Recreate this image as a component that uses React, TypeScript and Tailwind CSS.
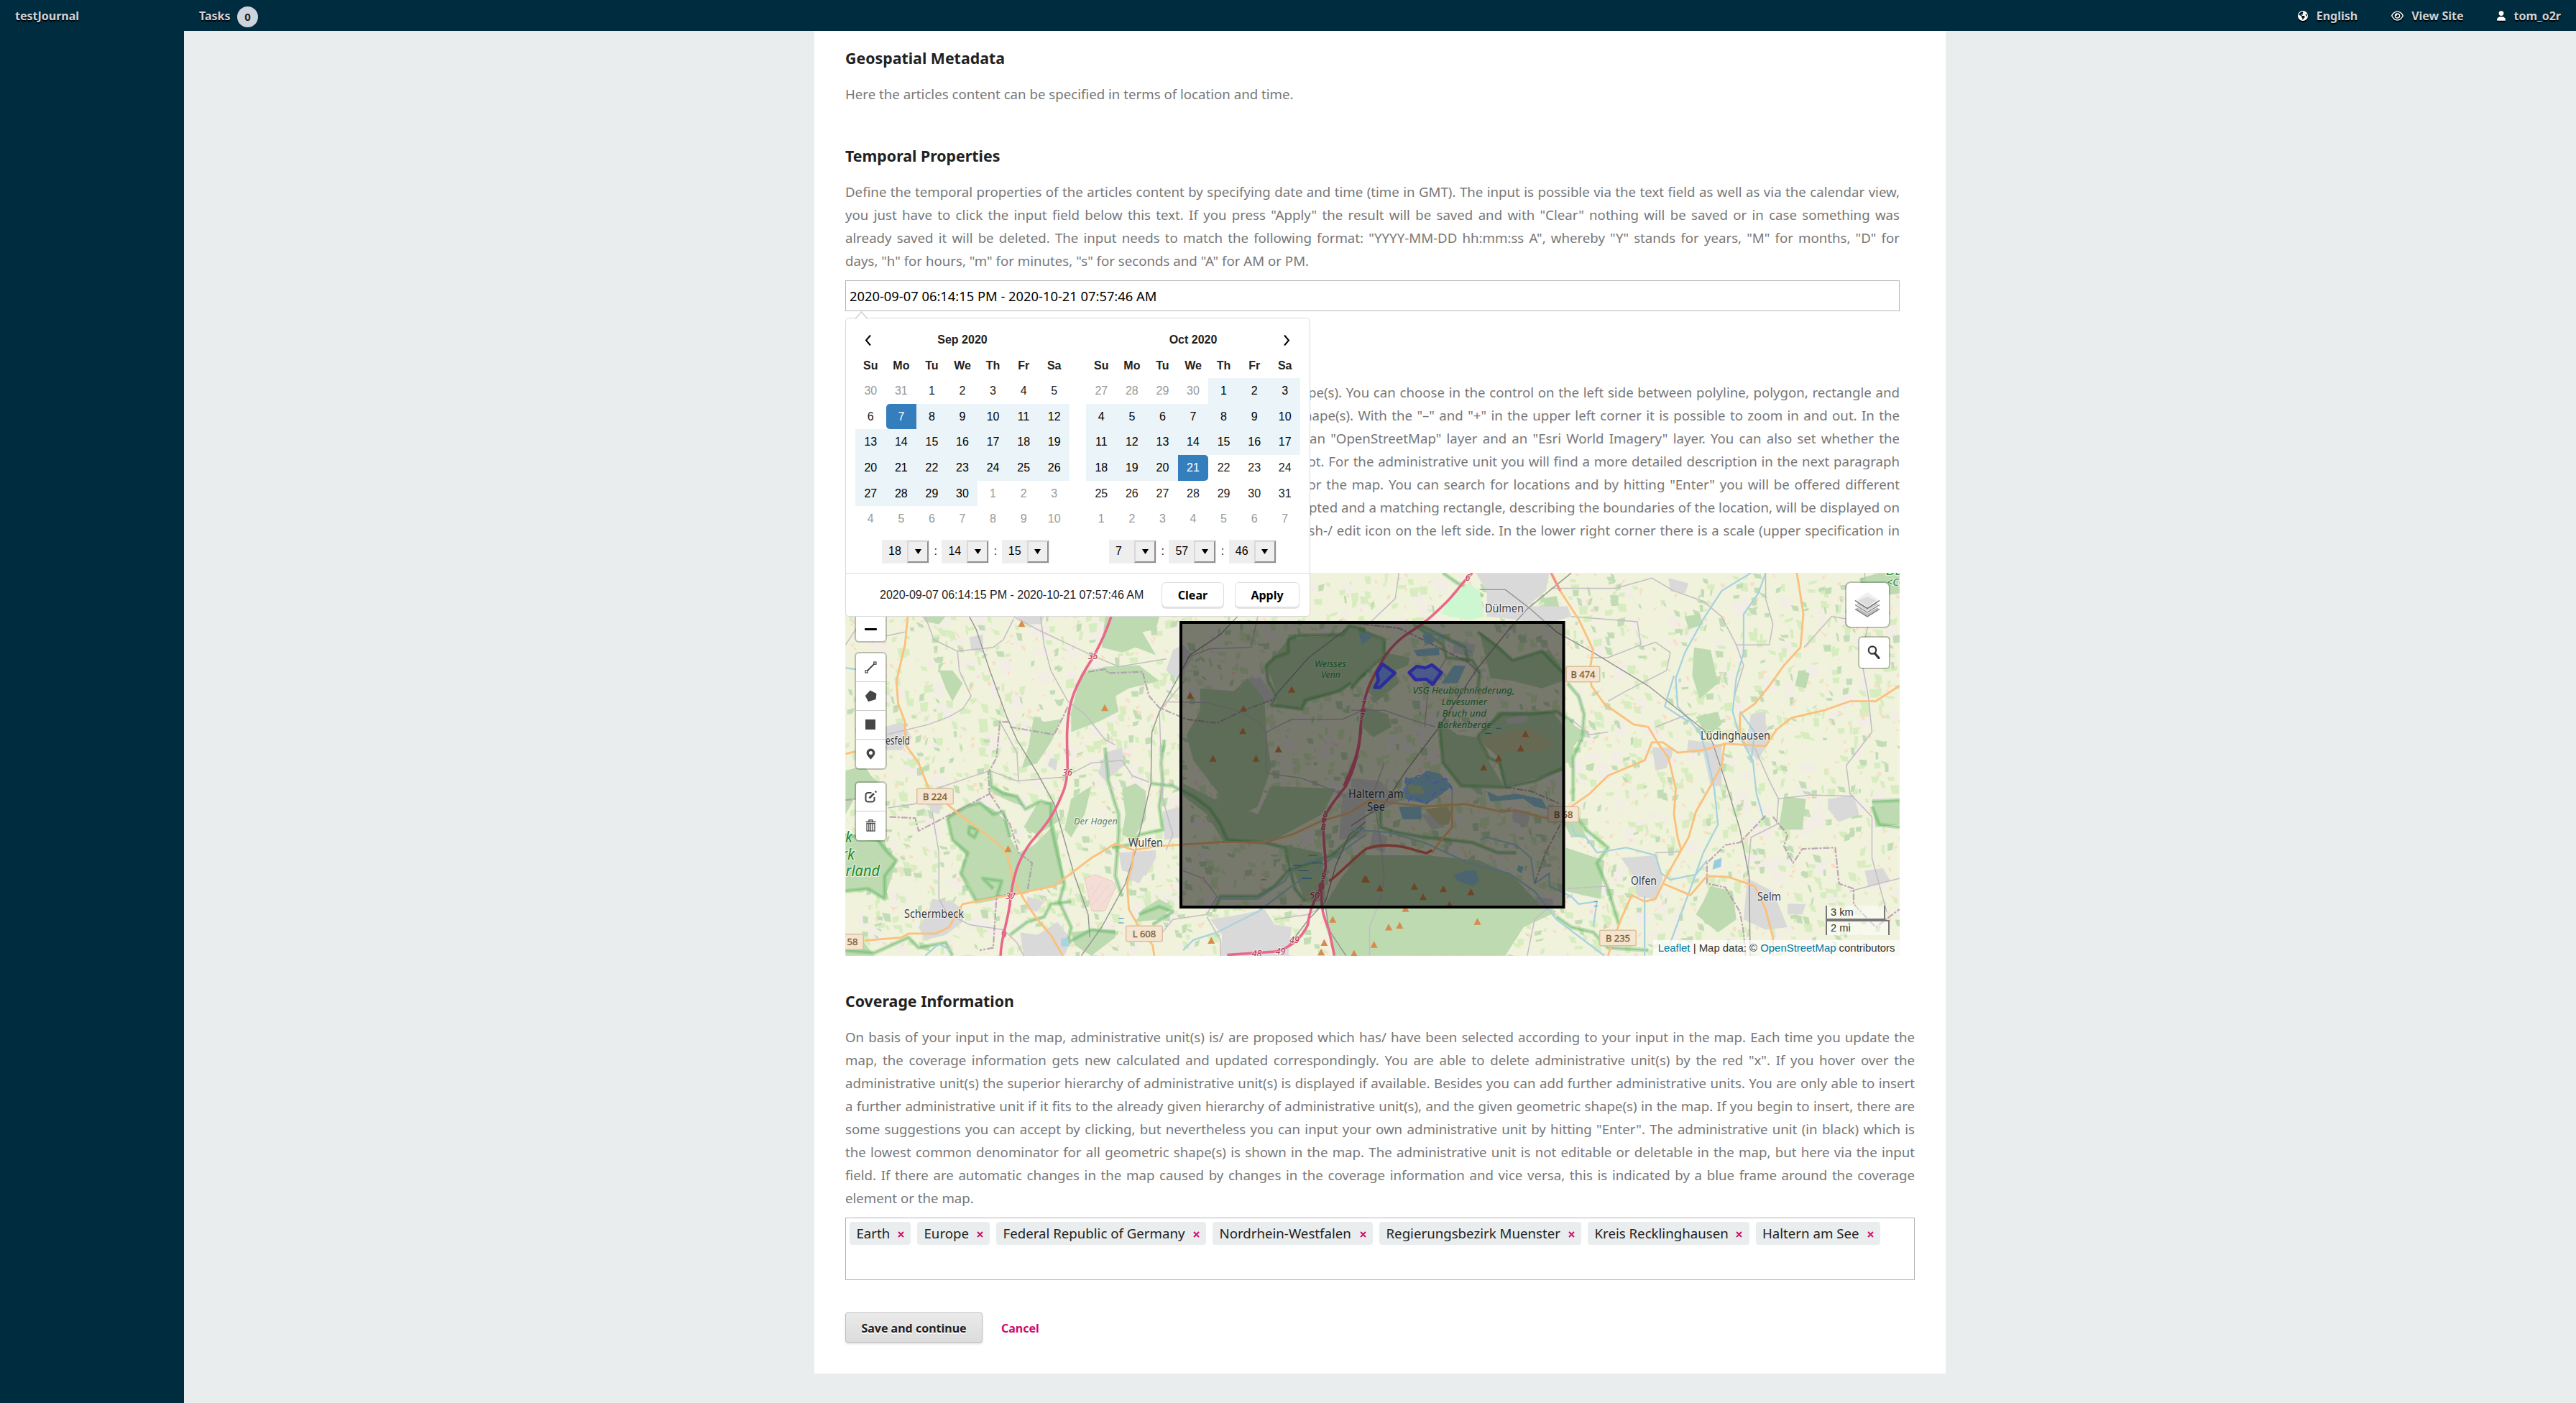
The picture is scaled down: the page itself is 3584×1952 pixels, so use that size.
import React from "react";
import { FaEarthAmericas, FaRegEye, FaUser } from "react-icons/fa6";

const temporalLines = [
  "Define the temporal properties of the articles content by specifying date and time (time in GMT). The input is possible via the text field as well as via the calendar view,",
  'you just have to click the input field below this text. If you press "Apply" the result will be saved and with "Clear" nothing will be saved or in case something was',
  'already saved it will be deleted. The input needs to match the following format: "YYYY-MM-DD hh:mm:ss A", whereby "Y" stands for years, "M" for months, "D" for',
  'days, "h" for hours, "m" for minutes, "s" for seconds and "A" for AM or PM.',
];

const spatialLines: [string, string][] = [
  ["pl-[613px]", "shape(s). You can choose in the control on the left side between polyline, polygon, rectangle and"],
  ["pl-[629px]", 'shape(s). With the "–" and "+" in the upper left corner it is possible to zoom in and out. In the'],
  ["pl-[646px]", 'an "OpenStreetMap" layer and an "Esri World Imagery" layer. You can also set whether the'],
  ["pl-[632px]", "not. For the administrative unit you will find a more detailed description in the next paragraph"],
  ["pl-[637px]", 'for the map. You can search for locations and by hitting "Enter" you will be offered different'],
  ["pl-[606px]", "accepted and a matching rectangle, describing the boundaries of the location, will be displayed on"],
  ["pl-[620px]", "trash-/ edit icon on the left side. In the lower right corner there is a scale (upper specification in"],
];

const coverageLines = [
  "On basis of your input in the map, administrative unit(s) is/ are proposed which has/ have been selected according to your input in the map. Each time you update the",
  'map, the coverage information gets new calculated and updated correspondingly. You are able to delete administrative unit(s) by the red "x". If you hover over the',
  "administrative unit(s) the superior hierarchy of administrative unit(s) is displayed if available. Besides you can add further administrative units. You are only able to insert",
  "a further administrative unit if it fits to the already given hierarchy of administrative unit(s), and the given geometric shape(s) in the map. If you begin to insert, there are",
  'some suggestions you can accept by clicking, but nevertheless you can input your own administrative unit by hitting "Enter". The administrative unit (in black) which is',
  "the lowest common denominator for all geometric shape(s) is shown in the map. The administrative unit is not editable or deletable in the map, but here via the input",
  "field. If there are automatic changes in the map caused by changes in the coverage information and vice versa, this is indicated by a blue frame around the coverage",
  "element or the map.",
];

function Lines({ lines }: { lines: string[] }) {
  return (
    <>
      {lines.map((l, i) => (
        <span
          key={i}
          className={
            i === lines.length - 1
              ? "block whitespace-nowrap"
              : "block whitespace-nowrap text-justify [text-align-last:justify]"
          }
        >
          {l}
        </span>
      ))}
    </>
  );
}

/* ---------- calendar ---------- */

const days = ["Su", "Mo", "Tu", "We", "Th", "Fr", "Sa"];
// Grid offsets are indexes into the 42 cells of a month page.
const sep = { title: "Sep 2020", prev: [30, 31], len: 30, from: 8, to: 31, start: 8, end: -1 };
const oct = { title: "Oct 2020", prev: [27, 28, 29, 30], len: 31, from: 4, to: 24, start: -1, end: 24 };

function Month({ m, side }: { m: typeof sep; side: "left" | "right" }) {
  const cells: { n: number; off: boolean }[] = [];
  m.prev.forEach((n) => cells.push({ n, off: true }));
  for (let n = 1; n <= m.len; n++) cells.push({ n, off: false });
  for (let n = 1; cells.length < 42; n++) cells.push({ n, off: true });
  return (
    <div className="w-[298px] text-center text-[16px] leading-[35.6px] text-[#222]">
      <div className="relative h-[35.6px] font-bold">
        {side === "left" && (
          <svg className="absolute left-[12px] top-[10px] h-[17px] w-[11px]" viewBox="0 0 11 17">
            <path d="M9 1.5 L3 8.5 L9 15.5" fill="none" stroke="#000" strokeWidth="2" />
          </svg>
        )}
        {m.title}
        {side === "right" && (
          <svg className="absolute right-[13px] top-[10px] h-[17px] w-[11px]" viewBox="0 0 11 17">
            <path d="M2 1.5 L8 8.5 L2 15.5" fill="none" stroke="#000" strokeWidth="2" />
          </svg>
        )}
      </div>
      <div className="grid grid-cols-7">
        {days.map((d) => (
          <div key={d} className="h-[35.6px] font-bold">{d}</div>
        ))}
        {cells.map((c, i) => {
          let k = "h-[35.6px] ";
          if (i === m.start) k += "bg-[#357ebd] text-white rounded-l-[5px]";
          else if (i === m.end) k += "bg-[#357ebd] text-white rounded-r-[5px]";
          else if (c.off) k += "text-[#999]";
          else if (i >= m.from && i <= m.to) k += "bg-[#ebf4f8] text-black";
          return <div key={i} className={k}>{c.n}</div>;
        })}
      </div>
    </div>
  );
}

function TimeSelect({ v }: { v: string }) {
  return (
    <div className="flex h-[33px] w-[66px] items-center bg-[#eee] pl-[9px] pr-px text-[16px] text-black">
      <span className="flex-1">{v}</span>
      <span className="flex h-[31px] w-[30px] items-center justify-center border-2 border-b-[#8f8f8f] border-l-[#d8d8d8] border-r-[#8f8f8f] border-t-[#d8d8d8] bg-[#efefef]">
        <svg className="h-[7px] w-[9px]" viewBox="0 0 9 7"><path d="M0 0H9L4.5 7Z" fill="#000" /></svg>
      </span>
    </div>
  );
}

function TimeRow({ t, pad }: { t: string[]; pad: string }) {
  return (
    <div className={"flex items-center " + pad}>
      {t.map((v, i) => (
        <React.Fragment key={i}>
          {i > 0 && <span className="w-[17.4px] text-center text-[16px]">:</span>}
          <TimeSelect v={v} />
        </React.Fragment>
      ))}
    </div>
  );
}

function Calendar() {
  return (
    <div className="absolute left-[-1px] top-[51px] z-20 h-[416px] w-[647px] rounded-[5px] border border-[#d8d8d8] bg-white font-['Liberation_Sans',Arial,sans-serif] text-[#222]">
      <svg className="absolute left-[12px] top-[-10px] h-[11px] w-[20px]" viewBox="0 0 20 11">
        <path d="M1 10.5 L9.5 1 L18 10.5" fill="#fff" stroke="#ccc" strokeWidth="1.3" />
        <rect x="2" y="10" width="15" height="2" fill="#fff" />
      </svg>
      <div className="flex h-[355px] flex-col border-b border-[#ddd]">
        <div className="flex gap-[23px] pl-[13px] pt-[12px]">
          <Month m={sep} side="left" />
          <Month m={oct} side="right" />
        </div>
        <div className="flex pl-[50px] pt-[11px]">
          <TimeRow t={["18", "14", "15"]} pad="w-[316px]" />
          <TimeRow t={["7", "57", "46"]} pad="" />
        </div>
      </div>
      <div className="flex h-[59px] items-center justify-end pr-[14px] text-[16px]">
        <span className="mr-[23px] w-[369px] whitespace-nowrap">2020-09-07 06:14:15 PM - 2020-10-21 07:57:46 AM</span>
        <button className="mr-[15px] h-[35px] w-[87px] rounded-[6px] border border-[#ddd] bg-white font-['Noto_Sans',sans-serif] font-bold text-black shadow-[0_2px_0_#e4e4e4]">Clear</button>
        <button className="h-[35px] w-[90px] rounded-[6px] border border-[#ddd] bg-white font-['Noto_Sans',sans-serif] font-bold text-black shadow-[0_2px_0_#e4e4e4]">Apply</button>
      </div>
    </div>
  );
}

/* ---------- map ---------- */

// Deterministic scatter of small irregular land-use parcels.
function scatter(seed: number, count: number, min: number, max: number) {
  let s = seed;
  const r = () => {
    s = (s * 1664525 + 1013904223) % 4294967296;
    return s / 4294967296;
  };
  let d = "";
  for (let i = 0; i < count; i++) {
    const x = 1176 + r() * 1467;
    const y = 797 + r() * 533;
    const w = min + r() * (max - min);
    const h = min + r() * (max - min);
    const k = (r() - 0.5) * 6;
    d += `M${x.toFixed(1)} ${y.toFixed(1)}l${w.toFixed(1)} ${k.toFixed(1)}l${(k * 0.8).toFixed(1)} ${h.toFixed(1)}l${(-w * 0.8).toFixed(1)} ${(-k * 0.7).toFixed(1)}z`;
  }
  return d;
}

const lightFields = scatter(7, 1400, 3, 13);
const woodsSmall = scatter(91, 850, 3, 12);
const pinkDots = scatter(33, 1100, 2, 6);
const paleFields = scatter(57, 420, 8, 24);

// Shapes of the western half, in a local coordinate frame.
const west = {
  woods: [
    "335,975 360,945 390,930 430,915 470,940 510,990 520,1050 545,1110 590,1080 650,1000 665,1100 680,1230 540,1270 420,1300 400,1240 375,1190 395,1130 350,1060",
    "35,1040 90,1040 150,1060 160,1110 185,1140 150,1290 100,1250 35,1260",
    "35,790 90,770 110,810 150,860 60,900 35,960",
    "800,190 960,190 950,240 910,250 950,340 890,310 850,330 790,310",
    "730,410 800,385 900,380 960,440 870,470 830,500 840,560 780,600 700,640 700,560",
    "590,580 620,600 670,590 640,680 600,760 555,780 575,690",
    "680,1020 700,900 760,850 740,960 700,1050",
    "850,860 890,840 920,870 920,980 880,1060 850,1040 860,960",
    "560,1010 600,920 650,910 660,990 600,1040",
    "1080,470 1180,480 1220,430 1270,500 1275,640 1290,780 1250,930 1170,980 1130,870 1060,750 1040,650 1080,560",
    "1275,380 1340,280 1500,260 1520,225 1568,240 1568,420 1490,480 1400,520 1380,550 1300,540 1310,500",
    "1290,850 1480,860 1440,960 1300,1060 1150,1070 1100,960 1030,890 1030,840 1120,900 1250,960",
    "1330,1080 1440,1110 1450,1300 1390,1300 1370,1230",
    "1450,1310 1500,1200 1568,1100 1568,1511 1480,1511 1450,1400",
    "960,1290 1000,1320 960,1370 890,1380 910,1330",
    "35,1460 90,1460 120,1511 35,1511",
    "700,1420 760,1410 830,1410 830,1440 760,1511 710,1470",
    "460,850 500,870 540,890 560,930 520,910 470,880",
    "1410,290 1450,270 1480,240 1420,340",
    "310,400 350,400 380,450 350,520 330,470",
    "260,190 330,190 310,220 270,210",
  ],
  towns: [
    "150,620 200,600 230,660 200,710 150,710",
    "290,1290 350,1300 385,1340 380,1380 330,1430 270,1450 250,1400 280,1340",
    "840,1110 950,1100 950,1130 920,1200 850,1180",
    "970,950 1020,930 1020,1050 975,1060",
    "800,720 850,700 855,770 800,830 780,800",
    "1110,1370 1200,1350 1270,1330 1300,1390 1350,1400 1340,1511 1140,1511 1145,1430",
    "550,1420 600,1430 660,1380 700,1450 680,1511 560,1511",
    "1000,320 1030,300 1060,340 1020,440 980,400",
    "1500,880 1568,860 1568,1050 1490,1060",
    "540,190 620,190 610,220 560,220",
    "400,270 440,260 440,330 405,320",
    "280,900 320,920 310,960 285,950",
    "570,1280 620,1300 600,1340 570,1330",
    "1220,430 1260,430 1305,510 1280,530",
    "890,1150 930,1160 900,1230 870,1210",
    "640,740 660,750 655,790 630,770",
  ],
  greenEdge: [
    "M335,975 L390,930 L430,915 L470,960 L500,950 L520,1050",
    "M335,975 L350,1060 L395,1110 L375,1190 L420,1300 L480,1285 L495,1220 L440,1210 L470,1250",
    "M400,1010 L425,1020 L415,1050 L398,1035 Z",
    "M35,1040 L130,1060 L160,1110 L185,1140 L150,1200 L150,1290 L100,1250 L35,1260",
    "M460,790 L465,850 L500,880 L540,890 L565,940 L610,910 L640,920 L640,1000 L660,1120 L680,1230 L665,1300 L700,1400 L690,1460 L760,1410 L830,1420",
    "M800,700 L810,830 L825,900 L840,960 L840,1040 L830,1200 L850,1280",
    "M975,670 L965,760 L970,830 L960,930 L970,1020 L900,1040 L870,1080 L820,1090",
    "M1275,380 L1300,350 L1340,330 L1340,280 L1370,265 L1500,260 L1520,225 L1568,240",
    "M1275,380 L1280,440 L1305,500 L1290,535 L1380,550 L1390,515 L1490,480 L1568,410",
    "M935,840 L1000,850 L1060,890 L1110,940 L1140,1000 L1160,1060 L1270,1070 L1330,1090 L1360,1250 L1390,1300",
    "M900,1350 L960,1320 L1000,1340 L940,1390",
    "M1120,1340 L1140,1280 L1250,1280 L1300,1240 L1340,1180 L1470,1120 L1560,1010",
    "M520,1430 L570,1380 L620,1360 L640,1310 L700,1300",
    "M35,1490 L120,1500 L220,1440 L250,1480 L330,1460 L350,1511",
  ],
  minor: [
    "M270,190 L295,280 L365,325 L370,400 L405,500 L380,550 L340,580 L280,610 L155,650",
    "M365,325 L470,310 L500,280 L530,200 M530,190 L600,240 L680,290 L760,340 L840,385 L980,355",
    "M610,190 L620,300 L640,400 L690,520 L740,570 L800,670 L830,690",
    "M160,935 L240,920 L280,870 L460,790 L540,830 L680,815 L760,760 L850,750 L880,810 L930,835",
    "M290,950 L310,1110 L310,1290 L340,1360",
    "M490,600 L540,720 L545,830",
    "M155,265 L210,250 M35,300 L70,230",
    "M340,1350 L400,1390 L500,1410 L540,1460 L560,1511",
    "M980,1100 L1000,1040 L970,900 L960,560 L1040,430",
    "M985,522 L1100,525 L1200,560 L1250,600 L1275,640 L1350,590 L1500,590 L1568,550",
    "M1040,350 L1110,315 L1230,310 L1250,190",
    "M1275,640 L1275,800 L1380,820 L1440,850 L1510,890",
    "M1030,1180 L1090,1210 L1130,1280 L1100,1350 L1000,1370 L950,1450",
    "M1100,1360 L1140,1450 L1140,1511 M1300,1370 L1400,1350 L1440,1320",
  ],
  orange: [
    "M218,190 L210,300 L185,440 L190,530 L210,600 L212,690 L250,760 L280,860 L370,960 L480,1070 L510,1110 L525,1200 L560,1290 L600,1370 L640,1430 L675,1511",
    "M35,725 L65,715",
    "M90,1452 L200,1440 L220,1425 L300,1425 L340,1400 L380,1310 L480,1285 L650,1240 L760,1130 L830,1075 L885,1100 L950,1085 L1150,1068 L1270,1070 L1350,1040 L1440,985 L1520,955 L1568,910",
    "M885,1100 L880,1160 L865,1230 L870,1330 L900,1400 L940,1470 L945,1511",
  ],
  rail: [
    "M400,190 L420,240 L460,400 L510,580 L540,670 L600,800 L650,920 L680,1060 L710,1200 L750,1350 L755,1440",
    "M1190,190 L1140,260 L1050,340 L1010,440 L960,560 L938,640 L935,840 L890,1100 L860,1230 L790,1400 L730,1511",
    "M1568,990 L1520,1040 L1480,1160 L1450,1300 L1400,1370 L1330,1490",
    "M1450,1320 L1460,1410 L1510,1511",
    "M1510,240 L1400,350 L1300,500",
  ],
  river: [
    "M1030,1490 L1060,1450 L1130,1420 L1250,1340 L1350,1240 L1470,1130 L1568,1040",
    "M1130,1290 L1250,1290 L1330,1220 L1360,1160 L1450,1130",
    "M35,390 L65,395",
    "M270,1511 L310,1465 L345,1490",
  ],
  border: [
    "M750,405 L800,395 L810,410 L910,405 L930,500 L960,545 L1040,590 L1130,605 L1200,560 L1300,510",
    "M520,620 L650,650 L680,570 L690,540",
    "M515,600 L490,600 L480,740 L455,800 L460,880 L360,950 L250,1025 L240,975 L160,970",
    "M460,880 L520,1000 L545,1110 L585,1150 L570,1265 L480,1280 L470,1480 L430,1490",
    "M35,905 L65,900",
  ],
};

const east = {
  woods: [
    "20,245 95,290 90,330 40,400 0,470 0,240",
    "90,330 160,350 155,380 120,400 130,450 70,520 45,480",
    "240,600 290,650 345,660 370,740 415,850 300,850 250,760",
    "350,250 400,300 440,360 540,320 578,400 578,440 520,470 440,440 380,430",
    "585,590 635,640 605,700 605,760 585,760",
    "400,560 550,560 580,620 580,790 420,850 400,740 350,660",
    "0,1120 200,1120 350,1140 440,1200 500,1290 560,1340 470,1400 420,1511 0,1511",
    "585,1090 690,1140 680,1290 585,1260",
    "560,940 620,970 640,1050 600,1050",
    "980,1240 1040,1260 1050,1370 1000,1420 940,1350 960,1300",
    "935,310 980,320 1000,450 950,510 930,420",
    "1180,890 1240,900 1230,1020 1165,1020",
    "1420,910 1495,905 1495,1000 1430,1010",
    "1390,40 1440,20 1495,20 1495,100 1440,110",
    "940,580 1000,560 1010,610 970,660",
    "910,190 950,180 960,220 920,240",
    "1220,400 1250,410 1240,470 1210,460",
    "520,120 560,110 570,170 530,150",
    "30,540 100,570 110,620 60,660 30,620",
  ],
  towns: [
    "340,20 540,20 530,90 480,150 590,150 600,190 530,220 440,200 370,190 370,90",
    "1090,570 1130,560 1130,600 1140,670 1110,750 1075,700",
    "920,670 1010,690 1010,850 980,850 960,720 915,720",
    "735,1130 830,1120 850,1210 830,1290 780,1280 770,1200",
    "1080,1210 1150,1260 1190,1400 1130,1410 1070,1370",
    "1300,900 1370,885 1385,960 1330,990 1300,940",
    "820,700 880,700 860,780 830,790",
    "865,40 920,60 910,100 870,90",
    "1400,1180 1450,1170 1470,1220 1410,1240",
    "0,820 80,830 130,910 60,960 0,930",
    "280,280 340,300 330,350 280,330",
    "440,940 490,950 480,1005 440,990",
    "190,960 250,960 255,1010 220,1020",
    "420,590 480,570 480,600 430,610",
    "1190,1310 1240,1310 1230,1350 1190,1350",
    "500,1280 550,1290 550,1330 520,1330",
    "60,1020 100,1050 90,1110 50,1090",
  ],
  greenEdge: [
    "M170,220 L250,300 L260,350 L330,360 L350,410 L345,480",
    "M20,240 L90,280 L90,340 L30,420 L0,470",
    "M190,225 L310,310 L320,370",
    "M345,250 L400,310 L440,360 L520,325 L578,410",
    "M590,450 L620,500 L635,570 L630,660 L605,740 L605,910",
    "M240,600 L250,760 L300,850 L420,855 L500,830 L578,780",
    "M345,655 L375,740 L405,760 L420,850",
    "M345,655 L410,570 L490,570 L560,560 L605,600",
    "M80,930 L80,1010 L120,1030 L200,1050 L330,1070 L400,1110 L450,1110",
    "M610,960 L640,1020 L700,1090 L670,1150 L700,1250 L730,1390",
    "M560,1360 L600,1400 L660,1420 L700,1480 L810,1490",
    "M1420,910 L1495,905 M1420,930 L1440,1000 L1495,1010",
    "M1390,40 L1400,80 L1460,100",
    "M250,20 L290,60 L360,110",
  ],
  minor: [
    "M130,20 L120,120 L50,215",
    "M545,80 L720,80 L820,40 L880,90 L960,130 L1010,190 L1050,300 L1070,380 L1045,500",
    "M600,190 L780,210 L790,300 L700,350 L650,350",
    "M1050,300 L1140,300 L1150,220 L1130,120 L1130,20",
    "M1400,20 L1410,220 L1390,350 L1410,500 L1420,640 L1350,770 L1360,880 L1420,970 L1420,1130 L1460,1340",
    "M1235,310 L1310,190 L1400,210",
    "M1100,700 L1140,830 L1165,900 L1250,885 L1370,890",
    "M1165,900 L1160,1000 L1090,1050 L1080,1200",
    "M790,310 L830,290 L870,330 L860,400 L750,480 L700,520",
    "M920,570 L830,620 M600,590 L650,650 L700,640",
    "M0,555 L90,555 L160,590 L230,620",
    "M90,760 L60,880 L80,1070 L90,1200 L80,1290 L50,1400 L50,1511",
    "M275,860 L275,920 M200,620 L210,470 L260,350",
    "M1360,1260 L1440,1230 L1495,1210",
    "M480,1511 L500,1370 L540,1320",
    "M830,1110 L900,1105 M700,1240 L590,1250",
  ],
  orange: [
    "M570,90 L620,200 L660,320 L650,400 L655,460 L690,530 L770,610 L810,620 L835,680 L865,740 L885,860 L880,960 L890,1050 L900,1100 L860,1200 L850,1230 L925,1275 L970,1200 L1030,1205 L1100,1240 L1130,1330 L1150,1440 L1150,1511",
    "M1215,20 L1222,80 L1233,180 L1225,310 L1180,380 L1140,460 L1100,530 L1060,570 L1060,640 L1075,690 L1130,695 L1160,630 L1200,585 L1290,555 L1360,520 L1430,520 L1495,460",
    "M0,950 L50,905 L110,915 L200,930 L310,920 L410,950 L450,945 L530,975 L600,930 L650,880 L700,810 L800,750 L820,680 L850,680 L890,720 L960,710 L1020,685 L1075,690",
    "M1018,685 L1010,770 L980,850 L940,950 L920,1050 L900,1100",
    "M850,1230 L830,1290 L800,1300 L765,1275 L735,1370 L700,1511",
    "M275,920 L275,1010 L240,1070 L220,1110",
  ],
  rail: [
    "M600,20 L480,160 L430,240 L340,400 L240,620 L150,790 L90,920 L0,1005",
    "M350,85 L420,85 L480,150 L560,250 L660,330 L810,460 L960,630 L985,680 L1020,830 L1060,1020 L1085,1200 L1088,1511",
  ],
  river: [
    "M1090,20 L1010,90 L960,200 L910,330 L885,430 L890,540 L950,640 L970,730 L990,860 L1000,1000 L960,1110 L930,1230 L860,1500",
    "M1130,20 L1110,100 L1070,180 L1070,330 L1050,430 L1040,560 L1060,660 L1095,750 L1105,880 L1125,980",
    "M1060,560 L1100,640 L1090,760",
    "M880,420 L855,540 L920,600",
    "M600,1000 L610,1040 L640,1050 L670,1110 L750,1090 L830,1120 L845,1190 L870,1215 L940,1195 L970,1140",
    "M0,1020 L100,1030 L200,1070 L320,1150 L430,1190 L500,1260 L560,1370 L690,1511",
    "M350,1060 L370,1050 L450,1080 L490,1130 L500,1230 L540,1190 L540,1240 L600,1280 L620,1310 L670,1300 L660,1400",
    "M190,240 L260,280 L330,330 M200,300 L250,270",
    "M800,1511 L800,1280",
  ],
  border: [
    "M0,215 L130,235 L210,290 L320,370 L350,410",
    "M1130,965 L1060,1070 L1020,1080 L970,1150 L970,1230 L1020,1245 L1060,1340 L1070,1420 L1075,1511",
    "M1150,970 L1190,1040 L1180,1085 L1205,1150 L1230,1095 L1320,1090 L1330,1230 L1370,1250 L1370,1310 L1430,1400 L1495,1330",
    "M420,855 L490,870 L570,920 M570,1000 L530,1110 L500,1230",
  ],
};

function Region({ g, t }: { g: typeof west; t: string }) {
  const v = { vectorEffect: "non-scaling-stroke" as const, fill: "none" };
  return (
    <g transform={t} strokeLinejoin="round">
      {g.woods.map((p) => <polygon key={p} points={p} fill="#bddab1" />)}
      {g.towns.map((p) => <polygon key={p} points={p} fill="#d9d9d9" />)}
      {g.greenEdge.map((p) => (
        <g key={p}>
          <path d={p} {...v} stroke="#6cbc6c" strokeOpacity=".35" strokeWidth="6" />
          <path d={p} {...v} stroke="#6cb86e" strokeOpacity=".5" strokeWidth="2" />
        </g>
      ))}
      {g.minor.map((p) => <path key={p} d={p} {...v} stroke="#c3bdc4" strokeWidth="1.5" />)}
      {g.river.map((p) => <path key={p} d={p} {...v} stroke="#a5d2e0" strokeWidth="2.2" />)}
      {g.border.map((p) => <path key={p} d={p} {...v} stroke="#ab8fab" strokeOpacity=".75" strokeWidth="2.2" strokeDasharray="9 2 3 2" />)}
      {g.rail.map((p) => <path key={p} d={p} {...v} stroke="#949494" strokeWidth="1.4" />)}
      {g.orange.map((p) => <path key={p} d={p} {...v} stroke="#fbc07c" strokeWidth="2.8" />)}
    </g>
  );
}

const peaksWest = [[554, 218], [799, 545], [514, 1095], [1051, 497], [1208, 548], [1206, 635], [1118, 743], [1245, 743], [1311, 706], [1350, 474], [1471, 1370], [1446, 1460], [1437, 1497], [1113, 1452], [1534, 1502], [1566, 1212]];
const peaksEast = [[475, 647], [462, 703], [402, 741], [361, 777], [41, 1214], [78, 1248], [172, 1241], [196, 1282], [251, 1251], [326, 1263], [268, 1312], [148, 1328], [344, 1378], [102, 1400], [132, 1393], [62, 1468]];

// text, left x, right x, baseline, size, style
const places: [string, number, number, number, number, string][] = [
  ["esfeld", 1232, 1266, 1036, 15.5, "town"],
  ["Schermbeck", 1258, 1341, 1277, 15.5, "town"],
  ["Wulfen", 1570, 1618, 1177.5, 15.5, "town"],
  ["Dülmen", 2066, 2120, 851.5, 15.5, "town"],
  ["Haltern am", 1876, 1952.5, 1109.5, 15.5, "town"],
  ["See", 1902, 1927, 1128, 15.5, "town"],
  ["Lüdinghausen", 2366, 2463, 1029, 15.5, "town"],
  ["Olfen", 2269, 2305, 1230.5, 15.5, "town"],
  ["Selm", 2445, 2478, 1252.5, 15.5, "town"],
  ["Der Hagen", 1494, 1555, 1146.5, 13, "wood"],
  ["Weisses", 1829, 1873, 927.5, 13, "park"],
  ["Venn", 1838, 1865, 943, 13, "park"],
  ["VSG Heubachniederung,", 1965.5, 2107.5, 965, 13, "park"],
  ["Lavesumer", 2005.5, 2069, 981, 13, "park"],
  ["Bruch und", 2006.5, 2068, 997, 13, "park"],
  ["Borkenberge", 2000, 2075, 1012.5, 13, "park"],
  ["rk", 1168, 1186, 1172, 21, "big"],
  ["rk", 1171, 1189, 1196, 21, "big"],
  ["rland", 1176.5, 1224, 1219, 21, "big"],
  ["Dül", 2624, 2652, 800, 14, "big"],
  ["<CC", 2625, 2650, 815, 14, "big"],
];

const styles: Record<string, { fill: string; italic: boolean }> = {
  town: { fill: "#3f3f3f", italic: false },
  wood: { fill: "#5f7f5f", italic: true },
  park: { fill: "#2f9a3f", italic: true },
  big: { fill: "#1f8a2c", italic: true },
};

const shields: [string, number, number, number][] = [
  ["B 224", 1275, 1096.5, 52],
  ["58", 1160, 1299, 42],
  ["L 608", 1566, 1287.5, 52],
  ["B 474", 2178.5, 926.5, 48],
  ["B 58", 2153, 1121.5, 44],
  ["B 235", 2225, 1293.5, 52],
];

const exits: [string, number, number][] = [
  ["35", 1520.5, 917], ["36", 1485, 1079], ["37", 1406, 1251], ["8", 1844, 1137], ["8", 1841, 1155],
  ["9", 1841.5, 1223], ["50", 1829, 1249.5], ["49", 1801, 1312], ["49", 1781.5, 1328], ["48", 1748.5, 1331],
  ["7", 1897, 984], ["7", 1895, 1001], ["6", 2042, 808],
];

const tw = "translate(1160 790) scale(0.4719 0.35714)";
const te = "translate(1880 790) scale(0.5102 0.35714)";

function MapDrawing() {
  const mw = { fill: "none", vectorEffect: "non-scaling-stroke" as const, stroke: "#e9688a", strokeWidth: 3.6 };
  return (
    <svg className="block h-full w-full" viewBox="1176 797 1467 533" preserveAspectRatio="none">
      <rect x="1176" y="797" width="1467" height="533" fill="#f0f2db" />
      <path d={paleFields} fill="#f2eee6" />
      <path d={lightFields} fill="#d7edbf" />
      <path d={woodsSmall} fill="#c2ddb6" />
      <path d={pinkDots} fill="#f9ddc6" />
      <Region g={west} t={tw} />
      <Region g={east} t={te} />
      <g transform={tw}>
        <polygon points="740,1210 770,1195 820,1220 832,1240 800,1335 760,1335" fill="#f5ddd7" stroke="#eec2ba" strokeWidth="2" />
        <path d="M765,1235 L750,1260 M790,1225 L758,1285 M812,1235 L762,1315 M822,1262 L782,1328" stroke="#ecc8c0" strokeWidth="2" />
        <path {...mw} d="M818,190 C800,260 780,320 745,390 C705,480 690,540 688,640 C686,740 696,790 680,860 C660,930 640,980 600,1040 C550,1110 530,1190 522,1280 C515,1380 492,1440 492,1511" />
        <path {...mw} d="M1555,620 C1550,700 1540,770 1510,850 C1480,900 1450,950 1444,985 C1440,1060 1452,1120 1450,1170 L1438,1240 C1420,1290 1402,1330 1398,1390 C1380,1440 1350,1480 1300,1495 L1160,1508" />
        <path {...mw} d="M1438,1240 C1436,1330 1444,1360 1460,1410 L1476,1511" />
        <path d="M1355,1160 H1380 M1400,1120 H1425 M1370,1180 H1400 M1410,1150 H1440 M1380,1210 H1410 M1260,1215 H1275 M840,1365 H855 M840,1383 H855" stroke="#3d8fc4" strokeWidth="3" />
        <ellipse cx="1438" cy="1240" rx="9" ry="14" fill="#e9688a" />
        <ellipse cx="1446" cy="980" rx="7" ry="9" fill="#e9688a" />
        <ellipse cx="502" cy="1425" rx="7" ry="16" fill="#e9688a" />
        <polygon points="670,1445 690,1440 695,1475 670,1475" fill="#aad3df" />
      </g>
      <g transform={te}>
        <polygon points="270,110 320,60 350,90 362,190 320,205 245,180" fill="#cdf7d0" />
        <polygon points="355,670 430,640 480,625 520,650 552,690 500,720 440,715 400,730 370,700" fill="#cfd3a4" />
        <polygon points="200,940 260,930 275,960 265,1000 240,1000" fill="#d3cf9a" />
        <g fill="#97cbe0">
          <polygon points="150,820 185,815 205,790 240,800 275,850 240,890 205,920 145,900" />
          <polygon points="130,930 190,930 192,980 140,980" />
          <polygon points="278,1200 310,1180 340,1178 350,1220 330,1240 290,1220" />
          <polygon points="280,380 312,382 290,450 245,450" />
          <polygon points="370,870 400,890 450,880 520,900 535,940 500,930 470,900 380,910" />
          <polygon points="170,320 240,310 240,340 180,345" />
          <polygon points="195,260 220,255 225,290 200,295" />
          <polygon points="20,250 60,265 30,300" />
          <polygon points="990,1140 1010,1130 1008,1165 985,1175" />
          <polygon points="455,1160 470,1165 465,1190 452,1180" />
        </g>
        <polygon points="150,840 190,850 200,880 160,880" fill="#bcd7a6" />
        <path {...mw} d="M330,20 C300,60 290,90 262,130 C220,190 200,215 150,260 C100,310 80,370 55,440 C35,500 28,560 24,650 C20,720 5,770 -20,850" />
        <path {...mw} stroke="#e8705f" d="M-60,1220 C-30,1190 0,1140 40,1095 C80,1075 120,1080 150,1090 L205,1112 L220,1100" />
        <path {...mw} stroke="#f2957f" d="M545,20 L570,90" />
        <ellipse cx="32" cy="556" rx="7" ry="9" fill="#e9688a" />
        <path d="M365,645 H382 M395,625 H408 M662,1300 H672 M662,1318 H672" stroke="#3d8fc4" strokeWidth="3" />
      </g>
      <g fill="#d98b4c">
        {peaksWest.map(([x, y]) => {
          const a = 1160 + x * 0.4719, b = 790 + y / 2.8;
          return <path key={x + "w" + y} d={`M${a} ${b - 5}l5 9.500h-10z`} />;
        })}
        {peaksEast.map(([x, y]) => {
          const a = 1880 + x * 0.5102, b = 790 + y / 2.8;
          return <path key={x + "e" + y} d={`M${a} ${b - 5}l5 9.500h-10z`} />;
        })}
      </g>
      <g fontFamily="'Noto Sans', sans-serif">
        {exits.map(([t, x, y], i) => (
          <text key={i} x={x} y={y} fontSize="12.5" fontStyle="italic" textAnchor="middle" fill="#b5304c" stroke="#fff" strokeOpacity=".6" strokeWidth="2" paintOrder="stroke">{t}</text>
        ))}
        {shields.map(([t, x, y, w]) => (
          <g key={t}>
            <rect x={x + 0.7} y={y + 0.7} width={w - 1.4} height="21.500" rx="2" fill="#f5e4cf" stroke="#d9bf9c" strokeWidth="1.4" />
            <text x={t === "58" ? 1186 : x + w / 2} y={y + 16} fontSize="13" textAnchor="middle" fill="#7a5c2e" stroke="#7a5c2e" strokeWidth=".3">{t}</text>
          </g>
        ))}
        {places.map(([t, a, b, y, s, k], i) => (
          <text key={i} x={a} y={y} fontSize={s} textLength={b - a} lengthAdjust="spacingAndGlyphs" fontStyle={styles[k].italic ? "italic" : "normal"} fill={styles[k].fill} stroke="#fff" strokeOpacity={k === "park" ? ".25" : ".55"} strokeWidth="2.5" paintOrder="stroke">{t}</text>
        ))}
      </g>
      <rect x="1643" y="866" width="532.5" height="396" fill="#000" fillOpacity=".5" stroke="#000" strokeWidth="4" />
      <g transform={te} strokeLinejoin="round">
        <g fill="#3c4f96" fillOpacity=".75" stroke="#2b2b9c" strokeWidth="4.500">
          <polygon vectorEffect="non-scaling-stroke" points="85,375 119,410 78,466 64,466 74,438 70,408" />
          <polygon vectorEffect="non-scaling-stroke" points="158,408 178,384 202,390 220,378 246,408 222,454 205,434 175,436" />
        </g>
        <path vectorEffect="non-scaling-stroke" d="M150,815 L142,890 M155,910 L165,890 L205,920 L235,865 L275,860 L258,820 L225,840 L205,808 L180,810 L150,850" fill="none" stroke="#3f4fae" strokeWidth="1.600" strokeDasharray="9 6" />
      </g>
    </svg>
  );
}

const tool = "flex h-10 items-center justify-center border-b border-[#ccc] last:border-b-0";
const bar = "overflow-hidden rounded-[4px] bg-white bg-clip-padding shadow-[0_0_0_2px_rgba(0,0,0,0.22)]";

function MapPanel() {
  return (
    <div className="relative mt-[43px] h-[533px] w-[1467px] overflow-hidden">
      <MapDrawing />
      <div className="absolute left-[15px] top-[14.5px] flex w-[40.500px] flex-col">
        <div className={bar}>
          <div className={tool} />
          <div className={tool + " pt-[7px]"}>
            <svg className="h-[3px] w-[17px]" viewBox="0 0 17 3"><rect width="17" height="3" rx="1" /></svg>
          </div>
        </div>
        <div className={bar + " mt-[17px]"}>
          <div className={tool}>
            <svg className="h-[17px] w-[17px]" viewBox="0 0 17 17" fill="none" stroke="#464646">
              <path d="M3.500 13.500 L13.500 3.500" strokeWidth="1.800" />
              <rect x="1" y="12.800" width="3.200" height="3.200" strokeWidth="1.200" />
              <rect x="12.800" y="1" width="3.200" height="3.200" strokeWidth="1.200" />
            </svg>
          </div>
          <div className={tool}>
            <svg className="h-[17px] w-[17px]" viewBox="0 0 17 17"><path d="M7.800 0.600 L16.400 5 L15.600 13 L5 16.200 L0.800 8Z" fill="#464646" /></svg>
          </div>
          <div className={tool}>
            <svg className="h-[14px] w-[14px]" viewBox="0 0 14 14"><rect width="14" height="14" fill="#464646" /></svg>
          </div>
          <div className={tool}>
            <svg className="h-[16px] w-[13px]" viewBox="0 0 13 16"><path fillRule="evenodd" d="M6.500 0.500a5.900 5.900 0 0 1 5.900 5.900c0 3.600-3.600 6.200-5.900 9.400C4.200 12.600.6 10 .6 6.400A5.900 5.900 0 0 1 6.500.5Zm0 3.400a2.500 2.500 0 1 0 0 5a2.500 2.500 0 0 0 0-5Z" fill="#464646" /></svg>
          </div>
        </div>
        <div className={bar + " mt-[20px]"}>
          <div className={tool}>
            <svg className="h-[17px] w-[17px]" viewBox="0 0 17 17" fill="none" stroke="#464646" strokeWidth="2">
              <path d="M9.500 3 H4.500 A3 3 0 0 0 1.500 6 V12.500 A3 3 0 0 0 4.500 15.500 H10.500 A3 3 0 0 0 13.500 12.500 V9" />
              <path d="M6.500 10.500 L13 4" strokeWidth="2.600" />
              <path d="M14.800 2.200 L16.200 0.900" strokeWidth="2.600" />
            </svg>
          </div>
          <div className={tool}>
            <svg className="h-[17px] w-[15px]" viewBox="0 0 15 17" fill="none" stroke="#464646" strokeWidth="1.300">
              <path d="M0.500 3.300 H14.500 M5 3 V0.800 H10 V3" />
              <path d="M2 5.500 V16.200 H13 V5.500 Z M4.800 5.500 V16 M7.500 5.500 V16 M10.200 5.500 V16" />
            </svg>
          </div>
        </div>
      </div>
      <div className="absolute right-[15.500px] top-[14px] flex flex-col items-end">
        <div className="flex h-[60.500px] w-[59px] items-center justify-center rounded-[6px] bg-white shadow-[0_0_0_2px_rgba(0,0,0,0.22)]">
          <svg className="h-[36px] w-[36px]" viewBox="0 0 36 36">
            <path d="M1 24.500 L18 35 L35 24.500 L18 14Z" fill="#bdbdbd" />
            <path d="M1 24.500 L18 35 L35 24.500" fill="none" stroke="#777" strokeWidth="1.200" />
            <path d="M1 18.500 L18 29 L35 18.500 L18 8Z" fill="#cfcfcf" />
            <path d="M1 18.500 L18 29 L35 18.500" fill="none" stroke="#fff" strokeWidth="3" />
            <path d="M1 18.500 L18 29 L35 18.500" fill="none" stroke="#777" strokeWidth="1.200" />
            <path d="M1 12.500 L18 23 L35 12.500 L18 1Z" fill="#efefef" />
            <path d="M6 12.500 L18 7 L30 12.500 L18 21Z" fill="#dcdcdc" />
            <path d="M1 12.500 L18 23.500 L35 12.500" fill="none" stroke="#666" strokeWidth="1.400" />
          </svg>
        </div>
        <div className="mt-[15px] flex h-[42px] w-[41px] items-center justify-center rounded-[4px] bg-white shadow-[0_0_0_2px_rgba(0,0,0,0.22)]">
          <svg className="h-[19px] w-[18px]" viewBox="0 0 18 19" fill="none" stroke="#333">
            <circle cx="7" cy="6.500" r="5.200" strokeWidth="2.200" />
            <path d="M10.500 11 L16 17.500" strokeWidth="3.200" strokeLinecap="round" />
          </svg>
        </div>
      </div>
      <div className="absolute bottom-0 right-0 flex flex-col items-end font-['Liberation_Sans',Arial,sans-serif] text-[#333]">
        <div className="mr-[14px] w-[89px] text-[14.670px] leading-[17px]">
          <div className="h-[20px] w-[83px] border-x-2 border-b-2 border-[#777] bg-white/50 pl-[5px] pt-px">3 km</div>
          <div className="h-[21px] border-x-2 border-t-2 border-[#777] bg-white/50 pl-[5px] pt-px">2 mi</div>
        </div>
        <div className="mt-[7px] h-[22px] whitespace-nowrap bg-white/70 px-[6.500px] text-[14.920px] leading-[22px]">
          <span className="text-[#0078a8]">Leaflet</span> | Map data: © <span className="text-[#0078a8]">OpenStreetMap</span> contributors
        </div>
      </div>
    </div>
  );
}

/* ---------- page ---------- */

const tags: [string, string][] = [
  ["Earth", "w-[85px]"],
  ["Europe", "w-[101px]"],
  ["Federal Republic of Germany", "w-[292px]"],
  ["Nordrhein-Westfalen", "w-[223px]"],
  ["Regierungsbezirk Muenster", "w-[281px]"],
  ["Kreis Recklinghausen", "w-[224.500px]"],
  ["Haltern am See", "w-[173.500px]"],
];

const heading = "h-8 whitespace-nowrap text-[21.330px] font-bold leading-8 text-[#222]";

export default function App() {
  return (
    <div className="flex h-[1952px] w-[3584px] flex-col overflow-hidden bg-[#e9edee] font-['Noto_Sans',sans-serif] text-[18.670px]">
      <header className="relative z-30 flex h-[43px] shrink-0 items-center bg-[#002c40] text-[16px] font-bold text-[#d0d2d5] [text-shadow:0_2px_1px_#000]">
        <div className="w-[277px] pl-[21px]">testJournal</div>
        <div className="w-[44px]">Tasks</div>
        <div className="ml-[9px] mt-[4px] flex h-[29px] w-[29px] items-center justify-center rounded-full bg-[#ced4dc] text-[15px] text-[#222] [text-shadow:none]">0</div>
        <div className="ml-auto flex items-center pr-[21px]">
          <FaEarthAmericas className="mr-[12px] h-[14px] w-[14px] text-white drop-shadow-[0_2px_0_#000]" />
          <span className="mr-[47px]">English</span>
          <FaRegEye className="mr-[11px] h-[16px] w-[17px] text-white drop-shadow-[0_2px_0_#000]" />
          <span className="mr-[46px]">View Site</span>
          <FaUser className="mr-[12px] h-[14px] w-[12px] text-white drop-shadow-[0_2px_0_#000]" />
          <span>tom_o2r</span>
        </div>
      </header>
      <div className="flex flex-1">
        <aside className="w-64 bg-[#002c40]" />
        <main className="flex flex-1 items-start justify-center">
          <div className="h-[1868px] w-[1574px] bg-white pl-[43px] pt-[22px]">
            <h3 className={heading}>Geospatial Metadata</h3>
            <p className="mt-[18px] leading-8 text-[#777]">Here the articles content can be specified in terms of location and time.</p>
            <h3 className={heading + " mt-[54px]"}>Temporal Properties</h3>
            <p className="mt-[18px] w-[1467px] leading-8 text-[#777]">
              <Lines lines={temporalLines} />
            </p>
            <div className="relative mt-[11px] flex h-[43px] w-[1467px] items-center border border-[#b5b5b5] pl-[5px] text-[18.330px] text-black">
              2020-09-07 06:14:15 PM - 2020-10-21 07:57:46 AM
              <Calendar />
            </div>
            <p className="mt-[97px] w-[1467px] leading-8 text-[#777]">
              {spatialLines.map(([pad, l]) => (
                <span key={l} className={"block whitespace-nowrap text-justify [text-align-last:justify] " + pad}>{l}</span>
              ))}
            </p>
            <MapPanel />
            <h3 className={heading + " mt-[47px]"}>Coverage Information</h3>
            <p className="mt-[18px] w-[1488px] leading-8 text-[#777]">
              <Lines lines={coverageLines} />
            </p>
            <div className="mt-[11px] flex h-[87px] w-[1488px] items-start gap-[9px] border border-[#b5b5b5] pl-[5px] pt-[5px]">
              {tags.map(([t, w]) => (
                <div key={t} className={"flex h-8 items-center justify-between whitespace-nowrap rounded-[4px] bg-[#e9edee] px-[9.500px] text-[#222] " + w}>
                  {t}
                  <svg className="mt-[2px] h-[9px] w-[9px]" viewBox="0 0 9 9"><path d="M1 1L8 8M8 1L1 8" stroke="#d00a6c" strokeWidth="1.900" /></svg>
                </div>
              ))}
            </div>
            <div className="mt-[45px] flex items-center text-[16px] font-bold">
              <button className="h-[42px] w-[191px] rounded-[3px] border border-[#bfbfbf] bg-linear-to-b from-[#eaeaea] to-[#dcdcdc] pt-[2px] text-[#222] shadow-[0_2px_3px_rgba(0,0,0,0.12)] [text-shadow:0_2px_0_#fff]">Save and continue</button>
              <span className="ml-[26px] pt-[2px] text-[#d00a6c]">Cancel</span>
            </div>
          </div>
        </main>
      </div>
    </div>
  );
}
